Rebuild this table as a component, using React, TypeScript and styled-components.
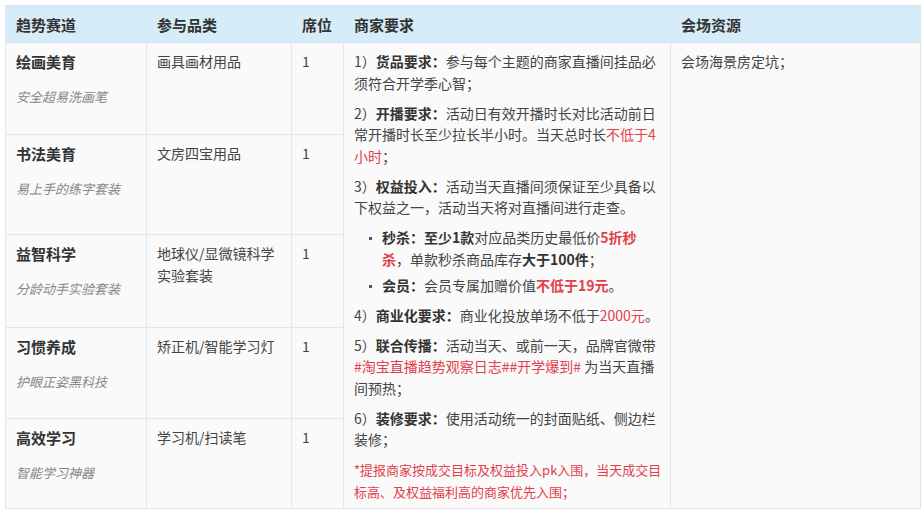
import React from "react";
import styled, { createGlobalStyle } from "styled-components";

const GlobalStyle = createGlobalStyle`
  html, body {
    margin: 0;
    padding: 0;
    background: #ffffff;
  }
  body {
    font-family: "Noto Sans CJK SC", "Microsoft YaHei", "Liberation Sans", sans-serif;
    color: #444;
  }
`;

const Page = styled.div`
  padding: 5px 3px 5px 5px;
`;

const Table = styled.table`
  width: 915px;
  table-layout: fixed;
  border-collapse: collapse;
  background: #fafafa;
  font-size: 14px;
`;

const HeadCell = styled.th`
  height: 36px;
  padding: 0 10px;
  background: #d6ecf8;
  border: 1px solid #d0e4f0;
  border-left-color: #d6ecf8;
  border-right-color: #d6ecf8;
  text-align: left;
  vertical-align: middle;
  font-size: 15px;
  font-weight: 700;
  color: #333;
`;

const Row = styled.tr<{ $h: number }>`
  height: ${({ $h }) => $h}px;
`;

const Cell = styled.td`
  padding: 8px 10px 0;
  border: 1px solid #e6e6e6;
  vertical-align: top;
  line-height: 21.5px;
  color: #444;
  word-break: break-all;
`;

const Track = styled.div`
  font-size: 15px;
  font-weight: 700;
  color: #333;
  margin-bottom: 13px;
`;

const Sub = styled.div`
  font-size: 13px;
  font-style: italic;
  color: #888;
`;

const Para = styled.p`
  margin: 0 0 8.5px;
  &:last-child {
    margin-bottom: 0;
  }
`;

const Note = styled.p`
  margin: 0 -8px 0 0;
  font-size: 13px;
  color: #e2404a;
`;

const Strong = styled.b`
  font-weight: 700;
  color: #333;
`;

const Red = styled.span<{ $bold?: boolean }>`
  color: #e2404a;
  font-weight: ${({ $bold }) => ($bold ? 700 : 400)};
`;

const List = styled.ul`
  list-style: none;
  margin: 0 0 8.5px;
  padding: 0 0 0 28px;
`;

const Item = styled.li`
  position: relative;
  margin-bottom: 4.5px;
  &:last-child {
    margin-bottom: 0;
  }
  &::before {
    content: "";
    position: absolute;
    left: -13px;
    top: 10px;
    width: 3px;
    height: 3px;
    background: #555;
  }
`;

const rows = [
  { track: "绘画美育", sub: "安全超易洗画笔", cat: "画具画材用品", h: 92 },
  { track: "书法美育", sub: "易上手的练字套装", cat: "文房四宝用品", h: 100 },
  { track: "益智科学", sub: "分龄动手实验套装", cat: "地球仪/显微镜科学实验套装", h: 93 },
  { track: "习惯养成", sub: "护眼正姿黑科技", cat: "矫正机/智能学习灯", h: 91 },
  { track: "高效学习", sub: "智能学习神器", cat: "学习机/扫读笔", h: 90 },
];

function Requirements() {
  return (
    <>
      <Para>
        1）<Strong>货品要求：</Strong>参与每个主题的商家直播间挂品必须符合开学季心智；
      </Para>
      <Para>
        2）<Strong>开播要求：</Strong>活动日有效开播时长对比活动前日常开播时长至少拉长半小时。当天总时长
        <Red>不低于4小时</Red>；
      </Para>
      <Para>
        3）<Strong>权益投入：</Strong>活动当天直播间须保证至少具备以下权益之一，活动当天将对直播间进行走查。
      </Para>
      <List>
        <Item>
          <Strong>秒杀：至少1款</Strong>对应品类历史最低价<Red $bold>5折秒杀</Red>，单款秒杀商品库存
          <Strong>大于100件</Strong>；
        </Item>
        <Item>
          <Strong>会员：</Strong>会员专属加赠价值<Red $bold>不低于19元</Red>。
        </Item>
      </List>
      <Para>
        4）<Strong>商业化要求：</Strong>商业化投放单场不低于<Red>2000元</Red>。
      </Para>
      <Para>
        5）<Strong>联合传播：</Strong>活动当天、或前一天，品牌官微带
        <Red>#淘宝直播趋势观察日志##开学爆到#</Red> 为当天直播间预热；
      </Para>
      <Para>
        6）<Strong>装修要求：</Strong>使用活动统一的封面贴纸、侧边栏装修；
      </Para>
      <Note>*提报商家按成交目标及权益投入pk入围，当天成交目标高、及权益福利高的商家优先入围；</Note>
    </>
  );
}

export default function App() {
  return (
    <Page>
      <GlobalStyle />
      <Table>
        <colgroup>
          <col style={{ width: 141 }} />
          <col style={{ width: 145 }} />
          <col style={{ width: 52 }} />
          <col style={{ width: 327 }} />
          <col style={{ width: 250 }} />
        </colgroup>
        <thead>
          <tr>
            <HeadCell>趋势赛道</HeadCell>
            <HeadCell>参与品类</HeadCell>
            <HeadCell>席位</HeadCell>
            <HeadCell>商家要求</HeadCell>
            <HeadCell>会场资源</HeadCell>
          </tr>
        </thead>
        <tbody>
          {rows.map((r, i) => (
            <Row key={r.track} $h={r.h}>
              <Cell>
                <Track>{r.track}</Track>
                <Sub>{r.sub}</Sub>
              </Cell>
              <Cell>{r.cat}</Cell>
              <Cell>1</Cell>
              {i === 0 && (
                <>
                  <Cell rowSpan={5}>
                    <Requirements />
                  </Cell>
                  <Cell rowSpan={5}>会场海景房定坑；</Cell>
                </>
              )}
            </Row>
          ))}
        </tbody>
      </Table>
    </Page>
  );
}
